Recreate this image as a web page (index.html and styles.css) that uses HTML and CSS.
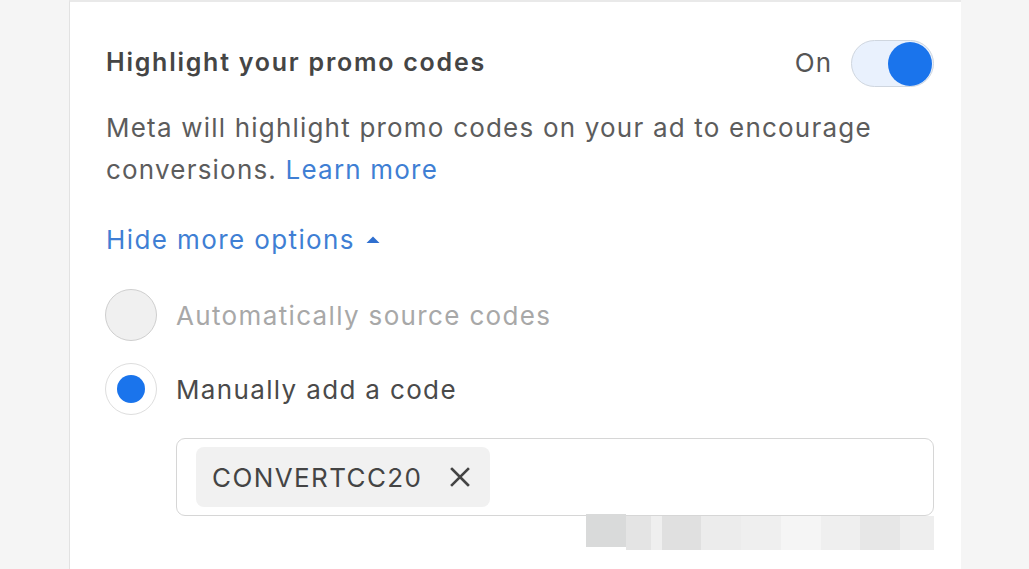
FILE: index.html
```html
<!DOCTYPE html>
<html>
<head>
<meta charset="utf-8">
<link rel="stylesheet" href="styles.css">
</head>
<body>
<div class="page">
  <div class="card">
    <div class="header">
      <div class="title">Highlight your promo codes</div>
      <div class="switch-wrap">
        <span class="on">On</span>
        <span class="toggle"><span class="knob"></span></span>
      </div>
    </div>
    <div class="desc">
      <div class="line">Meta will highlight promo codes on your ad to encourage</div>
      <div class="line">conversions. <a class="link" href="#">Learn more</a></div>
    </div>
    <div class="more"><span>Hide more options</span><svg class="caret" width="16" height="10" viewBox="0 0 16 10"><path d="M1.5 9 L8 2.5 L14.5 9 Z" fill="#2f6fcf"/></svg></div>
    <div class="options">
      <label class="opt disabled"><span class="radio off"></span><span>Automatically source codes</span></label>
      <label class="opt"><span class="radio sel"><span class="dot"></span></span><span>Manually add a code</span></label>
    </div>
    <div class="field">
      <span class="chip"><span class="code">CONVERTCC20</span><svg class="x" width="22" height="22" viewBox="0 0 22 22"><path d="M3 3 L19 19 M19 3 L3 19" stroke="#444" stroke-width="2.6" stroke-linecap="square"/></svg></span>
    </div>
    <div class="pix">
      <span class="p p1"></span><span class="p p2"></span><span class="p p3"></span><span class="p p4"></span><span class="p p5"></span><span class="p p6"></span><span class="p p7"></span><span class="p p8"></span><span class="p p9"></span><span class="p p10"></span>
    </div>
  </div>
</div>
</body>
</html>
```
FILE: styles.css
```css
html, body {
  margin: 0;
  padding: 0;
  background: #f5f5f5;
  height: 569px;
  overflow: hidden;
  font-family: Inter, Roboto, "Liberation Sans", sans-serif;
}
.page {
  padding-left: 69px;
}
.card {
  width: 828px;
  height: 600px;
  background: #fff;
  border-left: 1px solid #e2e2e2;
  border-top: 2px solid #e9e9e9;
  padding: 0 27px 0 36px;
  box-sizing: content-box;
}
.header {
  display: flex;
  justify-content: space-between;
  align-items: center;
  height: 47px;
  margin-top: 38px;
}
.title {
  font-size: 25px;
  font-weight: 600;
  color: #454545;
  margin-top: -4px;
  letter-spacing: 1.75px;
}
.switch-wrap {
  display: flex;
  align-items: center;
  gap: 19px;
}
.on {
  font-size: 26px;
  color: #555;
  margin-top: -3px;
  letter-spacing: 1px;
}
.toggle {
  width: 80px;
  height: 45px;
  border: 1px solid #cfd6df;
  border-radius: 24px;
  background: #e9f1fd;
  display: flex;
  align-items: center;
  justify-content: flex-end;
  padding-right: 1px;
}
.knob {
  width: 44px;
  height: 44px;
  border-radius: 50%;
  background: #1a74ec;
}
.desc {
  margin: 20px 0 0;
  font-size: 26px;
  line-height: 42px;
  color: #5c5c5c;
  letter-spacing: 1.2px;
}
.line {
  white-space: nowrap;
}
.link {
  color: #3f7fd4;
  text-decoration: none;
}
.more {
  display: flex;
  align-items: center;
  gap: 10px;
  margin-top: 33px;
  font-size: 26px;
  line-height: 32px;
  color: #3f7fd4;
  letter-spacing: 1.4px;
}
.caret {
  margin-top: -2px;
}
.options {
  display: flex;
  flex-direction: column;
  gap: 22px;
  margin-top: 33px;
}
.opt {
  display: flex;
  align-items: center;
  gap: 19px;
  font-size: 26px;
  color: #4a4a4a;
  margin-left: -1px;
  letter-spacing: 1.35px;
}
.opt.disabled {
  color: #a8a8a8;
}
.radio {
  width: 52px;
  height: 52px;
  border-radius: 50%;
  border: 1px solid #cfcfcf;
  box-sizing: border-box;
  display: flex;
  align-items: center;
  justify-content: center;
  flex: none;
}
.radio.off {
  background: #f0f0f0;
}
.radio.sel {
  background: #fff;
  border-color: #dedede;
}
.dot {
  width: 28px;
  height: 28px;
  border-radius: 50%;
  background: #1a74ec;
}
.field {
  margin: 23px 0 0 70px;
  width: 758px;
  height: 78px;
  border: 1px solid #d6d6d6;
  border-radius: 9px;
  display: flex;
  align-items: center;
  padding-left: 19px;
  box-sizing: border-box;
}
.chip {
  display: flex;
  align-items: center;
  gap: 27px;
  height: 60px;
  padding: 0 19px 0 16px;
  background: #f1f1f1;
  border-radius: 8px;
  font-size: 26px;
  color: #444;
}
.code {
  letter-spacing: 1.4px;
}
.pix {
  display: flex;
  margin-left: 480px;
  height: 36px;
  margin-top: -2px;
}
.p { height: 34px; display: block; }
.p1 { width: 40px; background: #d9dada; height: 33px; }
.p2 { width: 25px; background: #e4e4e4; margin-top: 2px; }
.p3 { width: 11px; background: #efefef; margin-top: 2px; }
.p4 { width: 40px; background: #e0e0e0; margin-top: 2px; }
.p5 { width: 40px; background: #ececec; margin-top: 2px; }
.p6 { width: 40px; background: #efefef; margin-top: 2px; }
.p7 { width: 40px; background: #f5f5f5; margin-top: 2px; }
.p8 { width: 40px; background: #efefef; margin-top: 2px; }
.p9 { width: 40px; background: #e7e7e7; margin-top: 2px; }
.p10 { width: 34px; background: #eeeeee; margin-top: 2px; }
```
